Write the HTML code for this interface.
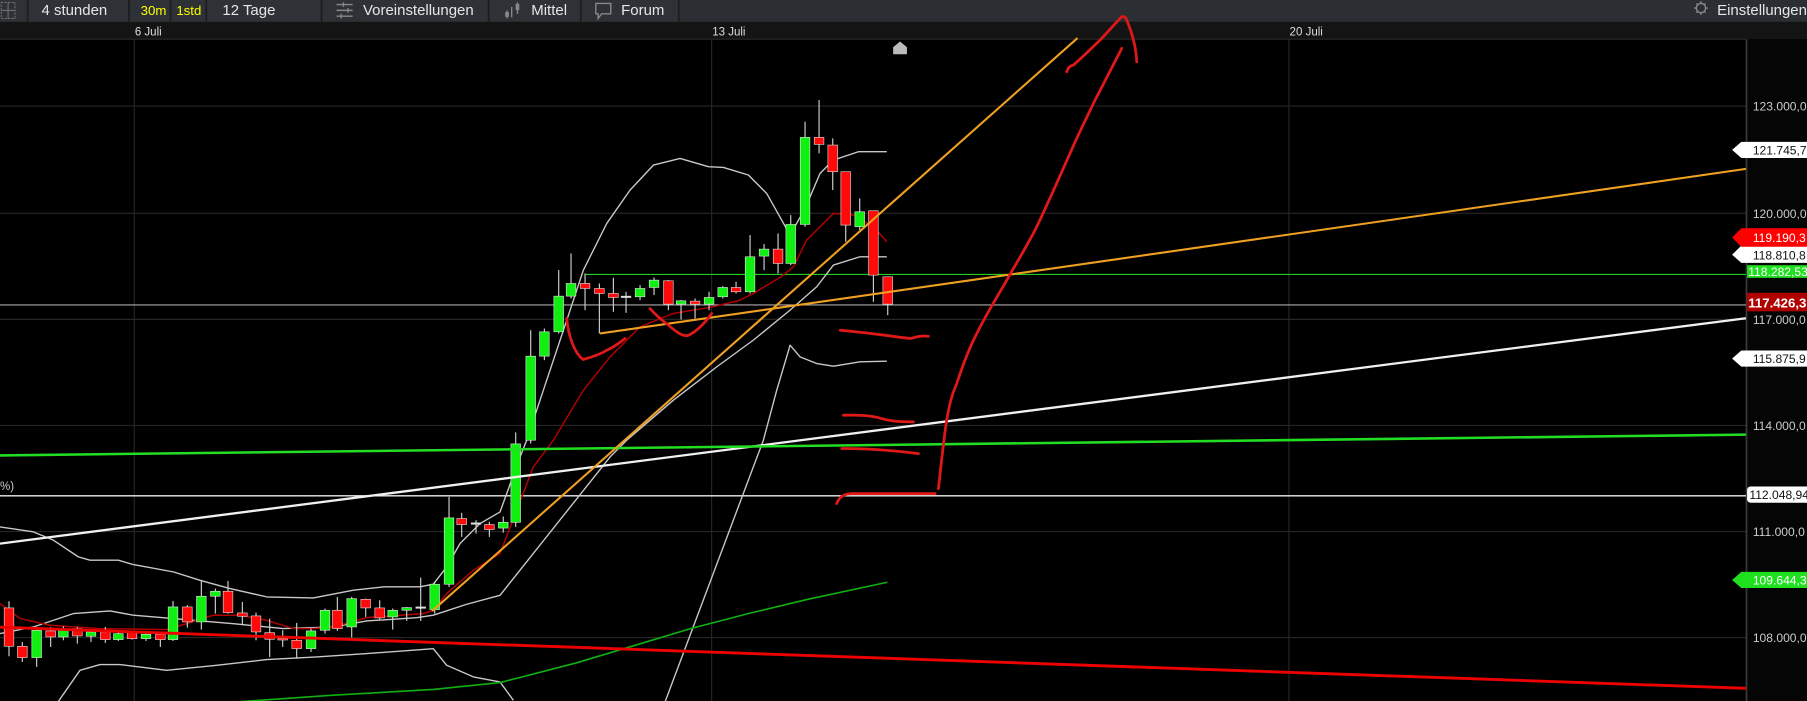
<!DOCTYPE html>
<html><head><meta charset="utf-8"><style>
html,body{margin:0;padding:0;background:#000;overflow:hidden}
svg{display:block}
text{font-family:"Liberation Sans",sans-serif}
</style></head><body>
<svg id="s" width="1807" height="701" viewBox="0 0 1568 608" preserveAspectRatio="none" xmlns="http://www.w3.org/2000/svg">
<rect width="1568" height="608" fill="#000"/>
<!-- toolbar -->
<rect x="0" y="0" width="1568" height="19" fill="#2b2e33"/>
<rect x="0" y="0" width="590" height="19" fill="#2e3136"/>
<g stroke="#1b1d20" stroke-width="1.5">
<line x1="24" y1="0" x2="24" y2="19"/><line x1="112" y1="0" x2="112" y2="19"/>
<line x1="148" y1="0" x2="148" y2="19"/><line x1="179" y1="0" x2="179" y2="19"/>
<line x1="279" y1="0" x2="279" y2="19"/><line x1="424" y1="0" x2="424" y2="19"/>
<line x1="504" y1="0" x2="504" y2="19"/><line x1="589" y1="0" x2="589" y2="19"/>
</g>
<g fill="none" stroke="#777" stroke-width="0.8">
<rect x="1" y="2" width="12" height="14" stroke-dasharray="2 1"/><line x1="1" y1="9" x2="13" y2="9"/><line x1="7" y1="2" x2="7" y2="16"/>
</g>
<g font-size="13" fill="#e6e6e6">
<text x="36" y="13">4 stunden</text>
<text x="122" y="13" fill="#ffff00" font-size="11.5">30m</text>
<text x="153" y="13" fill="#ffff00" font-size="11.5">1std</text>
<text x="193" y="13">12 Tage</text>
<text x="315" y="13">Voreinstellungen</text>
<text x="461" y="13">Mittel</text>
<text x="539" y="13">Forum</text>
<text x="1490" y="13">Einstellungen</text>
</g>
<g stroke="#888" stroke-width="1.2" fill="none">
<line x1="292" y1="4" x2="306" y2="4"/><line x1="292" y1="9" x2="306" y2="9"/><line x1="292" y1="14" x2="306" y2="14"/>
<line x1="298" y1="2" x2="298" y2="6"/><line x1="302" y1="7" x2="302" y2="11"/><line x1="296" y1="12" x2="296" y2="16"/>
<line x1="440" y1="9" x2="440" y2="16"/><line x1="444" y1="6" x2="444" y2="15"/><line x1="449" y1="2" x2="449" y2="12"/>
<rect x="439" y="11" width="2" height="3"/><rect x="448" y="4" width="2" height="4"/>
<path d="M517 3 H530 V12 H522 L519 16 V12 H517 Z"/>
<circle cx="1476" cy="7" r="4"/><path d="M1476 1v2M1476 11v2M1470 7h2M1480 7h2M1472 3l1 1M1480 3l-1 1M1472 11l1-1M1480 11l-1-1"/>
</g>
<!-- date bar -->
<rect x="0" y="19" width="1568" height="15" fill="#141414"/>
<line x1="0" y1="34" x2="1515" y2="34" stroke="#2a2a2a"/>
<g font-size="10" fill="#ddd"><text x="117" y="31">6 Juli</text><text x="618" y="31">13 Juli</text><text x="1119" y="31">20 Juli</text></g>
<!-- grid -->
<g stroke="#262626" stroke-width="1">
<line x1="116.5" y1="34" x2="116.5" y2="608"/><line x1="617.5" y1="34" x2="617.5" y2="608"/><line x1="1118.5" y1="34" x2="1118.5" y2="608"/>
<line x1="0" y1="92" x2="1515" y2="92"/><line x1="0" y1="185" x2="1515" y2="185"/><line x1="0" y1="277" x2="1515" y2="277"/>
<line x1="0" y1="369" x2="1515" y2="369"/><line x1="0" y1="461" x2="1515" y2="461"/><line x1="0" y1="553" x2="1515" y2="553"/>
</g>
<!-- axis -->
<rect x="1515" y="34" width="53" height="574" fill="#050505"/>
<line x1="1515.5" y1="34" x2="1515.5" y2="608" stroke="#3a3a3a" stroke-width="1.5"/>
<g font-size="10.5" fill="#ccc">
<text x="1521" y="96">123.000,0</text><text x="1521" y="189">120.000,0</text><text x="1521" y="281">117.000,0</text>
<text x="1521" y="373">114.000,0</text><text x="1521" y="465">111.000,0</text><text x="1521" y="557">108.000,0</text>
</g>
<text x="0" y="425" font-size="10" fill="#ccc">%)</text>
<path d="M775 47 L775 41 L781 36 L787 41 L787 47 Z" fill="#bbb"/>
<!-- fixed lines -->
<line x1="0" y1="264.5" x2="1515" y2="264.5" stroke="#aaa" stroke-width="1"/>
<line x1="0" y1="430" x2="1515" y2="430" stroke="#eee" stroke-width="1.2"/>
<line x1="508" y1="238" x2="1515" y2="238" stroke="#1fcf1f" stroke-width="1"/>
<g id="dyn"></g>
<line x1="0" y1="471.5" x2="1515" y2="276" stroke="#f0f0f0" stroke-width="2"/>
<line x1="0" y1="395" x2="1515" y2="377" stroke="#22dd22" stroke-width="2.2"/>
<line x1="0" y1="544" x2="1515" y2="597" stroke="#e00" stroke-width="2.5"/>
<line x1="375" y1="530" x2="935" y2="33" stroke="#f0a020" stroke-width="1.8"/>
<line x1="520.7" y1="289.2" x2="1515" y2="146.5" stroke="#f0a020" stroke-width="1.8"/>
<!-- hand drawn -->
<g fill="none" stroke="#e01818" stroke-width="2.4" stroke-linecap="round" stroke-linejoin="round">
<path d="M491.8 276.2 C493 290 498 306 506 311.8 C512 310 520 308 526 304 C533 301 538 297 542.4 293.6"/>
<path d="M564 267.6 C568 272 572 276 580 282 C587 288 592 292 597 291 C604 288 611 281 617.6 271.9"/>
<path d="M729 286.4 C750 288 775 292 790 293.6 C796 292 800 291 805.6 291.6"/>
<path d="M731.9 360.1 C745 360 755 360 765 363 C775 366 785 366 792.6 365.9"/>
<path d="M730.4 389 C745 389 770 390 797 393.4"/>
<path d="M726 436.8 C728 432 731 428 740 428.1 L811.4 428.1"/>
<path d="M814.3 423.8 C817 400 819 380 821.5 364.5 C824 350 826 342 830.2 332.7 C836 315 842 300 847.6 289.3 C856 272 865 258 873.6 243 C882 228 892 212 899.6 196.7 C910 175 920 152 928.5 133 C935 118 942 104 948.8 89.7 C958 72 966 56 973.4 41.9"/>
<path d="M925.7 62.2 C927 58 929 57 931.5 56.4 C940 49 947 42 954.6 34.7 C962 27 968 20 973.4 14.5 C976 14 977 15 977.7 17.4 C980 23 982 28 983.5 34.7 C985 40 986 47 986.4 53.5"/>
</g>
<!-- price labels -->
<g font-size="10.5">
<path d="M1503 130 L1511 123 L1568 123 L1568 137 L1511 137 Z" fill="#fff"/><text x="1521" y="134" fill="#111">121.745,7</text>
<path d="M1503 221 L1511 213 L1568 213 L1568 228 L1511 228 Z" fill="#fff"/><text x="1521" y="225" fill="#111">118.810,8</text>
<path d="M1503 206 L1511 198 L1568 198 L1568 214 L1511 214 Z" fill="#f00"/><text x="1521" y="210" fill="#fff">119.190,3</text>
<rect x="1516" y="230" width="52" height="11" fill="#1ee01e"/><text x="1517" y="239.5" fill="#fff">118.282,53</text>
<rect x="1516" y="254" width="52" height="16" fill="#b00000"/><text x="1517" y="266.5" fill="#fff" font-weight="bold" font-size="11.5">117.426,3</text>
<path d="M1503 311 L1511 304 L1568 304 L1568 318 L1511 318 Z" fill="#fff"/><text x="1521" y="315" fill="#111">115.875,9</text>
<rect x="1516" y="422" width="56" height="14" rx="3" fill="#fff"/><text x="1518" y="433" fill="#111">112.048,94</text>
<path d="M1503 503 L1511 496 L1568 496 L1568 510 L1511 510 Z" fill="#1ee01e"/><text x="1521" y="507" fill="#fff">109.644,3</text>
</g>
</svg>
<script>
(function(){
var NS="http://www.w3.org/2000/svg",g=document.getElementById("dyn");
function el(t,a){var e=document.createElementNS(NS,t);for(var k in a)e.setAttribute(k,a[k]);g.appendChild(e);return e;}
function z3(p){return p.map(function(q){return [q[0]/3.457,329.7+q[1]/3.457];});}
function z4(p){return p.map(function(q){return [433.9+q[0]/3.457,69.4+q[1]/3.457];});}
function pl(pts,c,w){el("polyline",{points:pts.map(function(p){return p[0].toFixed(1)+","+p[1].toFixed(1)}).join(" "),fill:"none",stroke:c,"stroke-width":w,"stroke-linejoin":"round"});}
// bands
pl(z3([[0,440],[100,455],[160,480],[235,530],[270,540],[355,540],[400,553],[520,575],[600,600],[690,625],[800,650],[940,653],[1060,630],[1150,620],[1260,620],[1300,612],[1340,560],[1380,490],[1440,430],[1500,395]]).concat(z4([[60,1130],[80,1080],[130,930],[200,720],[250,570],[320,430],[390,330],[460,255],[540,235],[625,260],[670,262],[745,285],[800,340],[870,465],[915,385],[960,280],[1000,240],[1075,215],[1160,215]])),"#c8c8c8",1.2);
pl(z3([[0,760],[100,740],[220,700],[330,692],[400,705],[520,715],[700,730],[850,745],[1000,740],[1100,722],[1250,712],[1300,705],[1400,672],[1500,645]]).concat(z4([[330,1130],[380,1080],[520,960],[650,860],[760,780],[870,690],[950,620],[1000,555],[1080,530],[1160,530]])),"#c8c8c8",1.2);
pl(z3([[160,985],[240,870],[300,853],[360,853],[500,870],[650,855],[800,838],[950,830],[1100,820],[1300,805],[1340,855],[1420,890],[1500,905],[1540,960]]),"#c8c8c8",1.2);
pl([[577,609]].concat(z4([[790,1080],[830,930],[870,795],[900,830],[950,850],[1000,858],[1080,845],[1160,843]])),"#c8c8c8",1.2);
// dark red MA
pl(z3([[0,670],[60,715],[150,735],[300,745],[500,748],[560,730],[640,705],[720,705],[800,720],[880,745],[940,745],[1000,740],[1100,712],[1200,705],[1270,700],[1300,690],[1340,640],[1420,570],[1500,520]]).concat(z4([[100,1160],[160,1080],[250,930],[330,830],[420,740],[520,700],[640,680],[720,660],[760,640],[840,592],[880,560],[920,480],[1000,400],[1060,405],[1120,440],[1160,485]])),"#b00000",1.3);
// green MA
pl([[202,609],[289,603],[376,598],[434,592],[500,575],[560,557],[600,545],[650,532],[700,520],[770,505]],"#10b010",1.4);
// candles: x, top, bottom, wickTop, wickBot, color
var c3=[[27,683,798,663,828,'r'],[67,798,832,785,845,'r'],[110,750,832,750,860,'g'],[152,752,770,740,800,'r'],[190,750,770,738,780,'g'],[232,745,767,740,790,'r'],[273,755,768,750,785,'g'],[316,755,778,740,788,'r'],[355,760,778,755,782,'g'],[396,755,775,752,778,'r'],[438,762,775,758,782,'g'],[481,762,778,755,800,'r'],[519,680,778,662,782,'g'],[562,680,725,675,742,'r'],[604,648,725,600,748,'g'],[646,633,648,625,700,'g'],[684,633,697,602,700,'r'],[727,698,708,665,735,'r'],[768,707,755,697,780,'r'],[809,757,777,715,830,'r'],[848,775,778,750,800,'r'],[890,780,805,728,835,'r'],[933,752,805,745,815,'g'],[975,690,750,685,760,'g'],[1012,690,745,650,752,'r'],[1055,655,740,650,772,'g'],[1097,657,683,655,710,'r'],[1139,683,713,660,718,'r'],[1178,690,710,685,748,'g'],[1220,682,690,680,722,'g'],[1262,680,684,592,722,'w'],[1304,612,688,610,700,'g'],[1347,413,612,350,620,'g'],[1385,415,433,398,470,'r'],[1428,428,432,420,460,'w'],[1468,433,448,425,470,'r']];
var c4=[[92,828,1080,750,1090,'g'],[133,755,828,745,840,'g'],[176,648,755,570,760,'g'],[213,610,648,520,655,'g'],[255,610,625,580,690,'r'],[298,625,640,610,760,'r'],[340,640,652,593,695,'r'],[378,648,652,635,698,'w'],[420,625,650,615,660,'g'],[462,600,622,592,645,'g'],[505,602,672,600,690,'r'],[543,662,672,660,718,'g'],[585,663,672,655,715,'r'],[627,652,672,635,690,'g'],[668,622,650,618,655,'g'],[708,622,635,605,640,'r'],[750,530,635,465,640,'g'],[792,507,528,492,570,'g'],[834,507,550,460,580,'r'],[872,433,550,405,555,'g'],[915,172,433,125,440,'g'],[957,172,193,60,220,'r'],[998,195,275,175,330,'r'],[1037,275,435,275,485,'r'],[1079,395,440,355,450,'g'],[1120,392,585,392,665,'r'],[1163,590,672,590,705,'r']];
var col={r:"#ff0a0a",g:"#10f010",w:"#ddd"};
function cand(x,t,b,wt,wb,c){
 el("line",{x1:x,y1:wt,x2:x,y2:wb,stroke:"#d0d0d0","stroke-width":1});
 var h=Math.max(b-t,1.2);
 el("rect",{x:x-4.2,y:t,width:8.4,height:h,fill:col[c],stroke:"#e8e8e8","stroke-width":0.5});
}
c3.forEach(function(k){cand(k[0]/3.457,329.7+k[1]/3.457,329.7+k[2]/3.457,329.7+k[3]/3.457,329.7+k[4]/3.457,k[5]);});
cand(436.7,453,458,448,462,'g');
cand(447.5,385,453,375,457,'g');
c4.forEach(function(k){cand(433.9+k[0]/3.457,69.4+k[1]/3.457,69.4+k[2]/3.457,69.4+k[3]/3.457,69.4+k[4]/3.457,k[5]);});
})();
</script>
</body></html>
